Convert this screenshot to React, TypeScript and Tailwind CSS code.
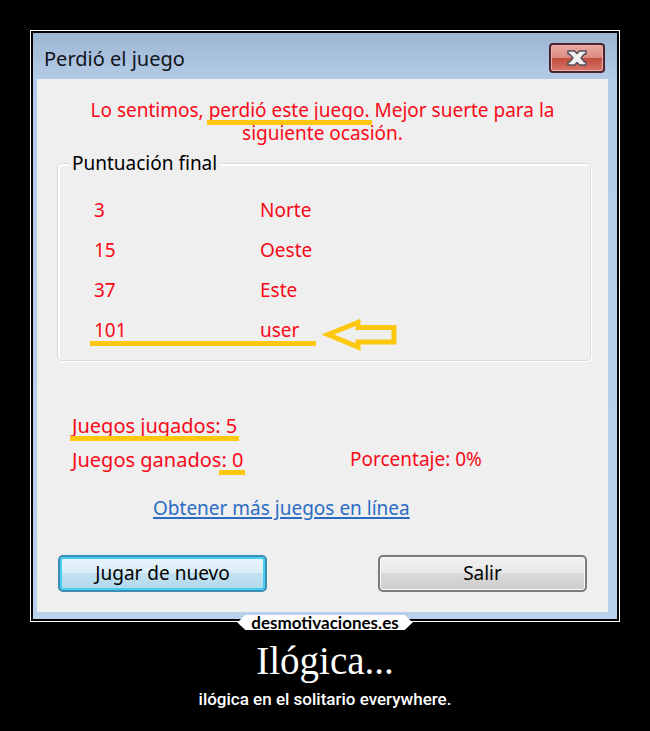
import type { ReactNode } from 'react';

const scores = [
  { points: 3, player: 'Norte' },
  { points: 15, player: 'Oeste' },
  { points: 37, player: 'Este' },
  { points: 101, player: 'user' },
];

// Text with a thick marker line drawn under it
function Marked({ children }: { children: ReactNode }) {
  return (
    <span className="relative whitespace-nowrap">
      {children}
      <span className="absolute -inset-x-0.5 -bottom-0.5 h-[5px] bg-[#ffc810]" />
    </span>
  );
}

function CloseButton() {
  return (
    <button
      type="button"
      aria-label="Cerrar"
      className="flex h-[30px] w-[56px] items-center justify-center rounded-[4px] border-2 border-[#4d2230] bg-[linear-gradient(#e9aaa2_0%,#dc8c82_48%,#c04a3a_50%,#d5796b_100%)] shadow-[inset_0_0_0_1px_#eeb0a8]"
    >
      <svg width="22" height="18" viewBox="0 0 22 18">
        <path
          d="M2 2h6.500L11 4.500 13.500 2H20v3h-1.500L15 9l3.500 4H20v3h-6.500L11 13.500 8.500 16H2v-3h1.500L7 9 3.500 5H2z"
          fill="#f4f4f4"
          stroke="#53525c"
          strokeWidth="1.5"
          strokeLinejoin="round"
        />
      </svg>
    </button>
  );
}

function Arrow() {
  return (
    <svg className="absolute top-2 left-[227px]" width="78" height="34" viewBox="0 0 78 34">
      <path
        d="M7 16.500 37 4.500v5h36v14.500H37v5z"
        fill="none"
        stroke="#ffc810"
        strokeWidth="5"
        strokeMiterlimit="10"
      />
    </svg>
  );
}

function Dialog() {
  return (
    <section className="bg-[linear-gradient(#9db6d2_0px,#b3cbe6_46px,#b9d1ea_100%)] pr-[9px] pb-[7px] pl-1">
      <header className="flex h-[46px] items-center justify-between pt-1 pr-[3px] pl-[7px]">
        <h2 className="text-[20px] text-[#10131c]">Perdió el juego</h2>
        <CloseButton />
      </header>

      <div className="bg-[#efefef] pt-5 pb-5">
        <p className="px-[42px] text-center text-[#f80a18]">
          Lo sentimos, <Marked>perdió este juego.</Marked> Mejor suerte para la siguiente ocasión.
        </p>

        <fieldset className="mt-[7px] mr-[17px] ml-5 rounded-[5px] border border-[#d3dde0] px-[36px] pt-[15px] pb-[10px] shadow-[inset_1px_1px_0_1px_#fff,1px_1px_0_#fff]">
          <legend className="-ml-[26px] bg-[#efefef] px-1 text-black">Puntuación final</legend>
          <div className="text-[#f80a18]">
            <table>
              <tbody>
                {scores.slice(0, 3).map((s) => (
                  <tr key={s.player} className="h-10">
                    <td className="w-[166px] p-0">{s.points}</td>
                    <td className="p-0">{s.player}</td>
                  </tr>
                ))}
                <tr className="relative h-10">
                  <td className="p-0">{scores[3].points}</td>
                  <td className="p-0">
                    {scores[3].player}
                    <span className="absolute bottom-1 -left-1 h-[5px] w-[226px] bg-[#ffc810]" />
                    <Arrow />
                  </td>
                </tr>
              </tbody>
            </table>
          </div>
        </fieldset>

        <div className="mt-[53px] grid grid-cols-[278px_1fr] gap-y-[11px] pl-[35px] text-[#f80a18]">
          <span className="text-[20px]">
            <Marked>Juegos jugados: 5</Marked>
          </span>
          <span />
          <span className="text-[20px]">
            Juegos ganados<Marked>: 0</Marked>
          </span>
          <span>Porcentaje: 0%</span>
        </div>

        <div className="mt-[26px] pl-[116px]">
          <a href="#" className="text-[#2a6cc4] underline decoration-2 underline-offset-2">
            Obtener más juegos en línea
          </a>
        </div>

        <div className="mt-[35px] flex justify-between px-[21px]">
          <button
            type="button"
            className="h-[37px] w-[209px] rounded-[5px] border-2 border-[#3b8db4] bg-[linear-gradient(#eaf5fb_0%,#d9edf7_48%,#c3e1f0_50%,#b0d8ec_100%)] text-black shadow-[inset_0_0_0_2px_#46cdf0]"
          >
            Jugar de nuevo
          </button>
          <button
            type="button"
            className="h-[37px] w-[209px] rounded-[5px] border-2 border-[#7c7c7c] bg-[linear-gradient(#f2f2f2_0%,#e8e8e8_48%,#d9d9d9_50%,#cdcdcd_100%)] text-black shadow-[inset_0_0_0_1px_#f8f8f8]"
          >
            Salir
          </button>
        </div>
      </div>
    </section>
  );
}

export default function App() {
  return (
    <main className="min-h-screen bg-black px-[30px] pt-[30px] pb-5 text-white">
      <div className="relative border border-white p-[2px] font-['Noto_Sans',sans-serif] text-[19px] leading-[23px]">
        <Dialog />
        <div className="absolute inset-x-0 -bottom-[9px] flex justify-center">
          <span className="bg-white px-[14px] font-['Lato',sans-serif] text-[17px] leading-[15px] font-bold text-black [clip-path:polygon(8px_0,calc(100%-8px)_0,100%_50%,calc(100%-8px)_100%,8px_100%,0_50%)]">
            desmotivaciones.es
          </span>
        </div>
      </div>

      <h1 className="mt-4 text-center font-['Liberation_Serif',serif] text-[39px] leading-[46px]">
        Ilógica...
      </h1>
      <p className="mt-1 text-center font-['Roboto',sans-serif] text-[17px] leading-[22px] font-medium">
        ilógica en el solitario everywhere.
      </p>
    </main>
  );
}
